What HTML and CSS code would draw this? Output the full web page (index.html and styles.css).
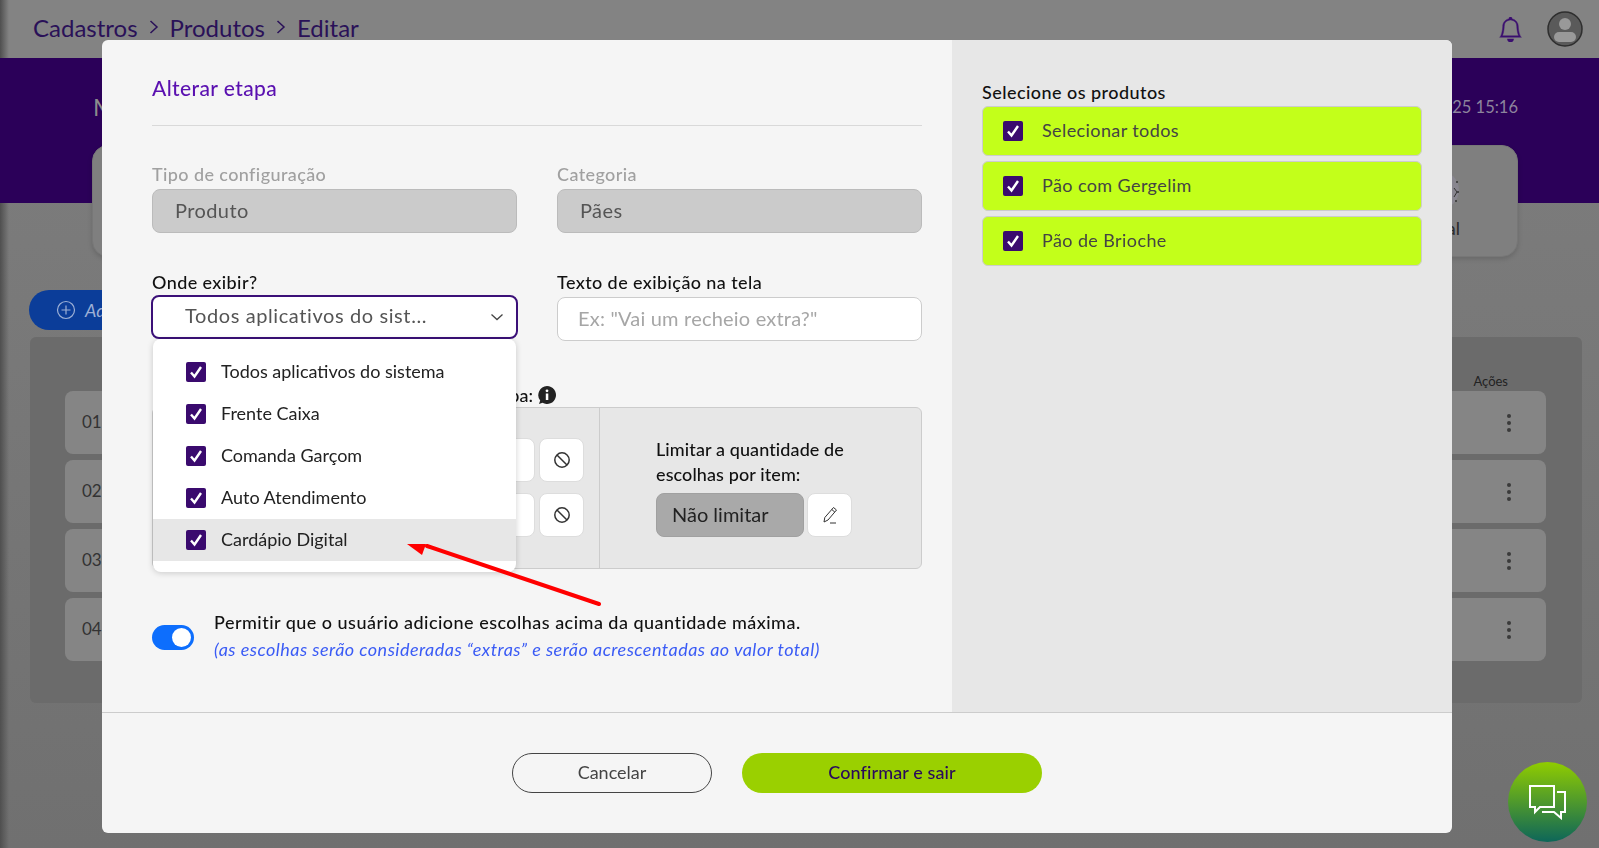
FILE: index.html
```html
<!DOCTYPE html>
<html lang="pt-BR">
<head>
<meta charset="utf-8">
<title>Editar produto</title>
<link rel="stylesheet" href="styles.css">
</head>
<body>
<div class="page">
  <header class="topbar">
    <nav class="crumbs">
      <span>Cadastros</span>
      <svg class="crumb-sep" viewBox="0 0 12 16"><path d="M2.500 2l6.500 6-6.500 6"/></svg>
      <span>Produtos</span>
      <svg class="crumb-sep" viewBox="0 0 12 16"><path d="M2.500 2l6.500 6-6.500 6"/></svg>
      <span>Editar</span>
    </nav>
    <div class="top-icons">
      <svg class="bell" viewBox="0 0 16 16"><path d="M8 16a2 2 0 0 0 2-2H6a2 2 0 0 0 2 2zM8 1.918l-.797.161A4.002 4.002 0 0 0 4 6c0 .628-.134 2.197-.459 3.742-.16.767-.376 1.566-.663 2.258h10.244c-.287-.692-.502-1.49-.663-2.258C12.134 8.197 12 6.628 12 6a4.002 4.002 0 0 0-3.203-3.92L8 1.917zM14.22 12c.223.447.481.801.78 1H1c.299-.199.557-.553.78-1C2.68 10.2 3 6.88 3 6c0-2.42 1.72-4.44 4.005-4.901a1 1 0 1 1 1.99 0A5.002 5.002 0 0 1 13 6c0 .88.32 4.2 1.22 6z"/></svg>
      <svg class="avatar" viewBox="0 0 36 36"><circle cx="18" cy="18" r="17" class="av-bg"/><circle cx="18" cy="13" r="6" class="av-fg"/><rect x="7" y="21" width="22" height="10" rx="5" class="av-fg"/></svg>
    </div>
  </header>
  <section class="band">
    <span class="band-title">Modelo</span>
    <span class="band-date">01/01/2025 15:16</span>
  </section>
  <section class="summary">
    <div class="summary-item">
      <svg class="summary-icon" viewBox="0 0 40 40"><circle cx="20" cy="20" r="19" class="si-bg"/><circle cx="37" cy="12" r="1" class="si-dot"/><circle cx="38" cy="22" r="1" class="si-dot"/><circle cx="36" cy="31" r="1" class="si-dot"/><path d="M34 18l3 4-3 5" class="si-line"/></svg>
      <span>Digital</span>
    </div>
  </section>
  <button class="add-btn">
    <svg class="add-icon" viewBox="0 0 20 20"><circle cx="10" cy="10" r="8.5"/><path d="M10 5.5v9M5.500 10h9"/></svg>
    <span>Adicionar</span>
  </button>
  <section class="table">
    <div class="table-head"><span>Ações</span></div>
    <div class="table-row"><span class="row-num">01</span><span class="dots"><i></i><i></i><i></i></span></div>
    <div class="table-row"><span class="row-num">02</span><span class="dots"><i></i><i></i><i></i></span></div>
    <div class="table-row"><span class="row-num">03</span><span class="dots"><i></i><i></i><i></i></span></div>
    <div class="table-row"><span class="row-num">04</span><span class="dots"><i></i><i></i><i></i></span></div>
  </section>
</div>

<div class="modal">
  <div class="modal-body">
    <div class="modal-main">
      <h2 class="modal-title">Alterar etapa</h2>
      <div class="form-grid first">
        <div>
          <label class="label muted">Tipo de configuração</label>
          <div class="input disabled">Produto</div>
        </div>
        <div>
          <label class="label muted">Categoria</label>
          <div class="input disabled">Pães</div>
        </div>
      </div>
      <div class="form-grid second">
        <div class="select-wrap">
          <label class="label">Onde exibir?</label>
          <div class="select">
            <span>Todos aplicativos do sist...</span>
            <svg class="chevron" viewBox="0 0 14 8"><path d="M1.500 1.500L7 6.500l5.500-5"/></svg>
          </div>
          <ul class="menu">
            <li class="menu-item"><span class="check"><svg viewBox="0 0 20 20"><path d="M5 10.500l3.500 4L15 5"/></svg></span>Todos aplicativos do sistema</li>
            <li class="menu-item"><span class="check"><svg viewBox="0 0 20 20"><path d="M5 10.500l3.500 4L15 5"/></svg></span>Frente Caixa</li>
            <li class="menu-item"><span class="check"><svg viewBox="0 0 20 20"><path d="M5 10.500l3.500 4L15 5"/></svg></span>Comanda Garçom</li>
            <li class="menu-item"><span class="check"><svg viewBox="0 0 20 20"><path d="M5 10.500l3.500 4L15 5"/></svg></span>Auto Atendimento</li>
            <li class="menu-item hover"><span class="check"><svg viewBox="0 0 20 20"><path d="M5 10.500l3.500 4L15 5"/></svg></span>Cardápio Digital</li>
          </ul>
        </div>
        <div>
          <label class="label">Texto de exibição na tela</label>
          <div class="input text placeholder">Ex: "Vai um recheio extra?"</div>
        </div>
      </div>
      <div class="limit-label">
        <span>Limitar a quantidade de escolhas por etapa:</span>
        <svg class="info" viewBox="0 0 18 18"><path d="M9 0a9 9 0 1 1-4.500 16.800L1 18l1.200-3.500A9 9 0 0 1 9 0z"/><circle cx="9" cy="4.800" r="1.400" class="info-i"/><rect x="7.800" y="7.500" width="2.500" height="6.500" class="info-i"/></svg>
      </div>
      <div class="limit-box">
        <div class="limit-left">
          <div class="limit-row">
            <div class="mini-input"></div>
            <button class="icon-btn"><svg class="ban" viewBox="0 0 18 18"><circle cx="9" cy="9" r="7.200"/><path d="M4 4l10 10"/></svg></button>
          </div>
          <div class="limit-row">
            <div class="mini-input"></div>
            <button class="icon-btn"><svg class="ban" viewBox="0 0 18 18"><circle cx="9" cy="9" r="7.200"/><path d="M4 4l10 10"/></svg></button>
          </div>
        </div>
        <div class="limit-right">
          <p class="limit-text">Limitar a quantidade de<br>escolhas por item:</p>
          <div class="limit-controls">
            <div class="limit-value">Não limitar</div>
            <button class="icon-btn"><svg class="pencil" viewBox="0 0 18 18"><path d="M12.500 1.500l3 2.500L7 14l-4 2 .8-4.500z"/><path d="M10.800 3.500l3 2.600M9 17h6"/></svg></button>
          </div>
        </div>
      </div>
      <div class="extra">
        <span class="toggle"><i></i></span>
        <div>
          <p class="extra-text">Permitir que o usuário adicione escolhas acima da quantidade máxima.</p>
          <p class="extra-note">(as escolhas serão consideradas “extras” e serão acrescentadas ao valor total)</p>
        </div>
      </div>
    </div>
    <aside class="modal-side">
      <p class="side-label">Selecione os produtos</p>
      <div class="prod-list">
        <div class="prod"><span class="check"><svg viewBox="0 0 20 20"><path d="M5 10.500l3.500 4L15 5"/></svg></span>Selecionar todos</div>
        <div class="prod"><span class="check"><svg viewBox="0 0 20 20"><path d="M5 10.500l3.500 4L15 5"/></svg></span>Pão com Gergelim</div>
        <div class="prod"><span class="check"><svg viewBox="0 0 20 20"><path d="M5 10.500l3.500 4L15 5"/></svg></span>Pão de Brioche</div>
      </div>
    </aside>
  </div>
  <footer class="modal-foot">
    <button class="btn cancel">Cancelar</button>
    <button class="btn confirm">Confirmar e sair</button>
  </footer>
</div>

<svg class="arrow" viewBox="0 0 210 70"><path class="arrow-line" d="M192 64L20 6"/><path class="arrow-head" d="M0 4L19 4L15 15z"/></svg>

<button class="chat">
  <svg viewBox="0 0 38 35"><path d="M1 1H25V22H11L6 27V22H1Z"/><path d="M28 7H36V27H32V33L25 27H13"/></svg>
</button>
</body>
</html>
```
FILE: styles.css
```css
* { box-sizing: border-box; }
html, body { margin: 0; height: 848px; overflow: hidden; }
body {
  font-family: "Lato", "Noto Sans", sans-serif;
  color: #111;
  background: #777;
}
p, ul, h2 { margin: 0; padding: 0; }
button { font-family: inherit; cursor: pointer; }

.page {
  position: relative;
  height: 848px;
  background: linear-gradient(#7e7e7e, #707070);
}
.page::before {
  content: "";
  position: absolute;
  left: 0;
  top: 0;
  bottom: 0;
  width: 9px;
  background: linear-gradient(90deg, #4f4f4f, rgba(80,80,80,0));
  z-index: 1;
}
.topbar {
  height: 58px;
  padding: 0 16px 4px 33px;
  background: #838383;
  display: flex;
  align-items: center;
  justify-content: space-between;
}
.crumbs {
  display: flex;
  align-items: center;
  gap: 10px;
  font-size: 24px;
  color: #2a1158;
}
.crumb-sep { width: 12px; height: 16px; fill: none; stroke: #2a1158; stroke-width: 1.500; }
.top-icons { display: flex; align-items: center; gap: 24px; padding-top: 4px; }
.bell { width: 25px; height: 25px; fill: #3c1070; stroke: #3c1070; stroke-width: .25; }
.avatar { width: 36px; height: 36px; }
.av-bg { fill: #5a5a5a; stroke: #2e2e2e; stroke-width: 1.500; }
.av-fg { fill: #999; }

.band {
  position: relative;
  z-index: 2;
  height: 145px;
  background: #2b0059;
  padding: 35px 81px 0 93px;
  display: flex;
  justify-content: space-between;
  align-items: flex-start;
  color: #8d849d;
  font-size: 16.500px;
}
.band-title { font-size: 24px; line-height: 28px; color: #8c8c8c; }
.band-date { line-height: 28px; }

.summary {
  position: relative;
  z-index: 3;
  height: 112px;
  margin: -58px 81px 0 92px;
  background: #7f7f7f;
  border-radius: 16px;
  box-shadow: 0 2px 5px rgba(0,0,0,.15);
  border: 1px solid #777;
  display: flex;
  justify-content: flex-end;
  padding-right: 57px;
}
.summary-item {
  display: flex;
  flex-direction: column;
  align-items: flex-end;
  font-size: 18px;
  color: #2b2b2b;
  padding-top: 24px;
}
.summary-icon { width: 40px; height: 40px; margin-bottom: 7px; }
.si-bg { fill: #88868f; }
.si-dot { fill: #333; }
.si-line { fill: none; stroke: #333; stroke-width: 1; }

.add-btn {
  display: flex;
  align-items: center;
  gap: 9px;
  width: 200px;
  height: 40px;
  margin: 33px 0 0 29px;
  padding: 0 0 0 27px;
  border: 0;
  border-radius: 20px;
  background: #0b3d99;
  color: #9db0d6;
  font-size: 18px;
  font-style: italic;
}
.add-icon { width: 20px; height: 20px; fill: none; stroke: #9db0d6; stroke-width: 1.200; }

.table {
  height: 366px;
  margin: 7px 17px 0 30px;
  padding: 0 36px 0 35px;
  background: #6b6b6b;
  border-radius: 6px;
}
.table-head {
  height: 54px;
  padding: 34px 38px 0 0;
  display: flex;
  justify-content: flex-end;
  font-size: 13px;
  line-height: 20px;
  color: #222;
}
.table-row {
  height: 63px;
  margin-bottom: 6px;
  padding: 0 35px 0 17px;
  background: #858585;
  border-radius: 8px;
  display: flex;
  align-items: center;
  justify-content: space-between;
  font-size: 17px;
  color: #333;
}
.row-num { margin-bottom: 3px; }
.dots { display: flex; flex-direction: column; gap: 3px; }
.dots i { width: 4px; height: 4px; border-radius: 50%; background: #3a3a3a; }

.modal {
  position: fixed;
  z-index: 10;
  left: 102px;
  top: 40px;
  width: 1350px;
  height: 793px;
  background: #f5f5f5;
  border-radius: 6px;
  overflow: hidden;
  display: flex;
  flex-direction: column;
}
.modal-body {
  height: 673px;
  display: flex;
  border-bottom: 1px solid #ccc;
}
.modal-main { width: 850px; padding: 33px 30px 0 50px; position: relative; }
.modal-side { width: 500px; background: #e7e7e7; padding: 40px 30px 0; }
.modal-title {
  font-size: 21px;
  font-weight: 500;
  line-height: 30px;
  padding-bottom: 22px;
  border-bottom: 1px solid #d9d9d9;
  color: #5a10b0;
  letter-spacing: .4px;
}
.form-grid { display: grid; grid-template-columns: 365px 365px; gap: 40px; }
.form-grid.first { margin-top: 36px; }
.form-grid.second { margin-top: 37px; }
.label {
  display: block;
  font-size: 18px;
  font-weight: 500;
  line-height: 24px;
  margin-bottom: 3px;
  color: #111;
  letter-spacing: .4px;
}
.label.muted { color: #a0a0a0; }
.input {
  height: 44px;
  border-radius: 8px;
  border: 1px solid #ccc;
  padding: 0 22px 2px;
  display: flex;
  align-items: center;
  font-size: 20px;
}
.input.disabled { background: #cbcbcb; border-color: #bbb; color: #555; letter-spacing: .4px; }
.input.text { background: #fff; margin-top: 1px; padding-left: 20px; }
.placeholder { color: #a6a6a6; font-size: 20px; letter-spacing: .2px; }
.select-wrap { position: relative; }
.select {
  height: 44px;
  margin: -2px -1px 0;
  background: #fff;
  border: 2px solid #3b1078;
  border-radius: 8px;
  padding: 0 12px 4px 32px;
  display: flex;
  align-items: center;
  justify-content: space-between;
  font-size: 20px;
  color: #555;
  letter-spacing: .6px;
}
.chevron { width: 14px; height: 8px; margin-top: 4px; fill: none; stroke: #444; stroke-width: 1.300; }
.menu {
  position: absolute;
  top: 69px;
  left: 1px;
  width: 363px;
  height: 233px;
  padding-top: 12px;
  list-style: none;
  background: #fff;
  border-radius: 8px;
  box-shadow: 0 1px 6px rgba(0,0,0,.18);
  z-index: 5;
}
.menu-item {
  height: 42px;
  padding: 0 0 2px 33px;
  display: flex;
  align-items: center;
  gap: 15px;
  font-size: 18px;
  color: #222;
}
.menu-item .check { margin-top: 2px; }
.menu-item.hover { background: #e7e7e7; }
.check {
  width: 20px;
  height: 20px;
  flex: none;
  border-radius: 2px;
  background: #3a0a6e;
  display: block;
}
.check svg { display: block; width: 20px; height: 20px; fill: none; stroke: #fff; stroke-width: 2.400; }

.limit-label {
  margin-top: 42px;
  width: 404px;
  height: 24px;
  display: flex;
  align-items: center;
  justify-content: flex-end;
  white-space: nowrap;
  gap: 5px;
  font-size: 18px;
  font-weight: 500;
}
.info { width: 18px; height: 18px; flex: none; fill: #222; }
.info .info-i { fill: #fff; }
.limit-box {
  width: 770px;
  height: 162px;
  display: grid;
  grid-template-columns: 447px 1fr;
  background: #e7e7e7;
  border: 1px solid #ccc;
  border-radius: 6px;
}
.limit-left {
  border-right: 1px solid #ccc;
  padding: 30px 15px 0 0;
  display: flex;
  flex-direction: column;
  gap: 11px;
}
.limit-row { display: flex; justify-content: flex-end; gap: 4px; }
.mini-input { width: 140px; height: 44px; background: #fff; border: 1px solid #ddd; border-radius: 8px; }
.icon-btn {
  width: 45px;
  height: 44px;
  padding: 0;
  background: #fff;
  border: 1px solid #ddd;
  border-radius: 8px;
  display: flex;
  align-items: center;
  justify-content: center;
}
.ban { width: 18px; height: 18px; fill: none; stroke: #333; stroke-width: 1.500; }
.pencil { width: 18px; height: 18px; fill: none; stroke: #333; stroke-width: 1; }
.limit-right { padding: 29px 0 0 56px; }
.limit-text { font-size: 18px; font-weight: 500; line-height: 25px; color: #111; letter-spacing: .1px; white-space: nowrap; }
.limit-controls { display: flex; gap: 3px; margin-top: 6px; }
.limit-value {
  width: 148px;
  height: 44px;
  background: #a9a9a9;
  border-radius: 8px;
  border: 1px solid #a0a0a0;
  padding: 0 0 2px 15px;
  display: flex;
  align-items: center;
  font-size: 20px;
  color: #222;
}
.extra { margin-top: 40px; display: flex; align-items: center; gap: 20px; }
.toggle {
  width: 42px;
  height: 25px;
  flex: none;
  margin-top: 2px;
  border-radius: 13px;
  background: #0d6efd;
  padding: 3px;
  display: flex;
  justify-content: flex-end;
}
.toggle i { width: 19px; height: 19px; border-radius: 50%; background: #fff; }
.extra-text { font-size: 18px; font-weight: 500; line-height: 27px; color: #111; letter-spacing: .47px; white-space: nowrap; }
.extra-note { font-size: 18px; font-style: italic; line-height: 27px; color: #3a5bf5; letter-spacing: .47px; white-space: nowrap; }

.side-label { font-size: 18px; font-weight: 500; line-height: 24px; margin-bottom: 2px; color: #111; letter-spacing: .45px; }
.prod-list { display: flex; flex-direction: column; gap: 5px; }
.prod {
  height: 50px;
  padding: 0 0 2px 20px;
  background: #c3ff1a;
  border: 1px solid #ccc;
  border-radius: 6px;
  display: flex;
  align-items: center;
  gap: 19px;
  font-size: 18px;
  letter-spacing: .4px;
  color: #444;
}
.prod .check { margin-top: 2px; }
.modal-foot {
  flex: 1;
  padding-top: 40px;
  display: flex;
  justify-content: center;
  gap: 30px;
}
.btn { height: 40px; padding: 0 0 3px; border-radius: 20px; font-size: 18px; }
.cancel { width: 200px; background: transparent; border: 1px solid #444; color: #444; }
.confirm { width: 300px; background: #9ad000; border: 0; color: #2a0a5c; font-weight: 500; letter-spacing: .1px; }

.arrow { position: fixed; z-index: 20; left: 407px; top: 540px; width: 210px; height: 70px; }
.arrow-line { fill: none; stroke: #f00; stroke-width: 4; stroke-linecap: round; }
.arrow-head { fill: #f00; }

.chat {
  position: fixed;
  z-index: 20;
  left: 1508px;
  top: 762px;
  width: 79px;
  height: 80px;
  padding: 0;
  border: 0;
  border-radius: 50%;
  background: linear-gradient(#90cc00, #0d6659);
  display: flex;
  align-items: center;
  justify-content: center;
}
.chat svg { width: 38px; height: 35px; fill: none; stroke: #fff; stroke-width: 2; }
```
